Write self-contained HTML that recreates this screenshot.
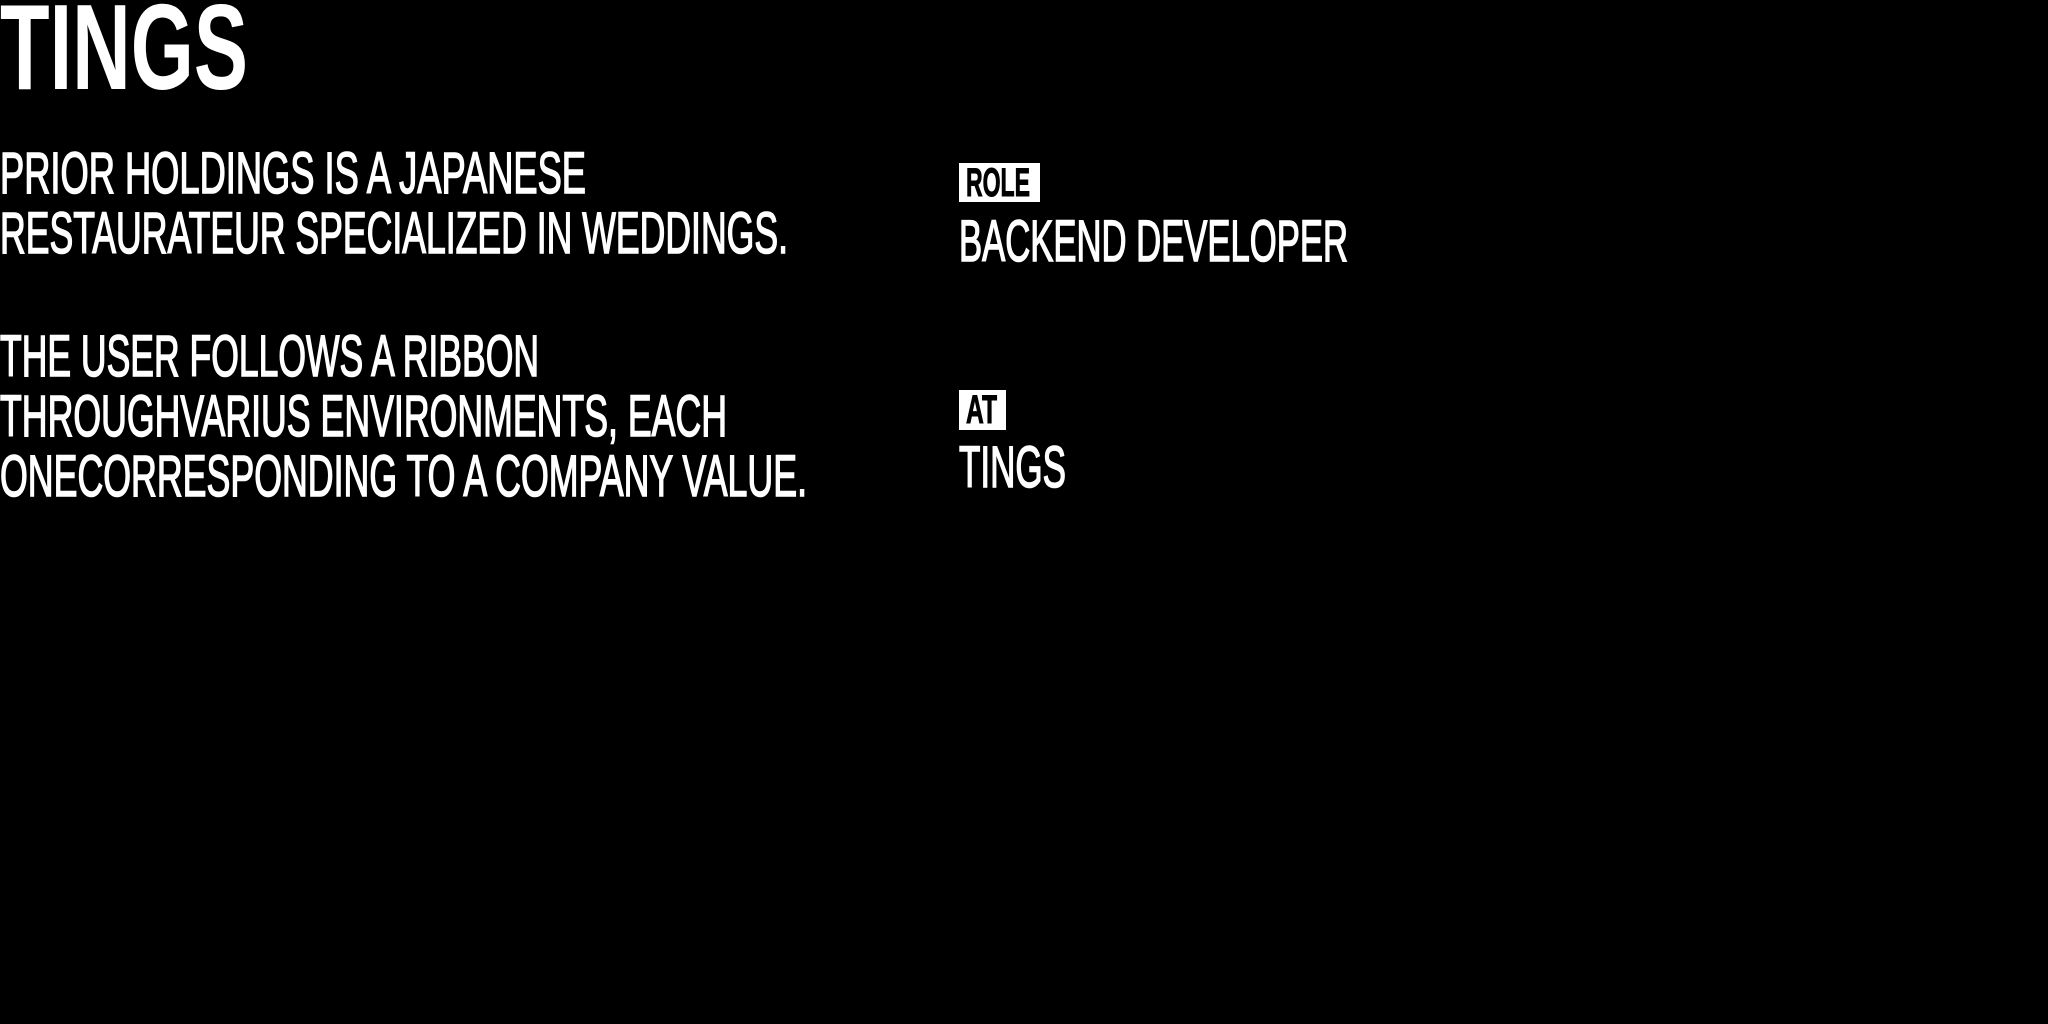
<!DOCTYPE html>
<html>
<head>
<meta charset="utf-8">
<style>
html,body{margin:0;padding:0;background:#000;width:2048px;height:1024px;overflow:hidden}
svg{display:block}
text{font-family:"Liberation Sans",sans-serif;fill:#fff}
.b{stroke:#fff;stroke-width:1.6px}
.k{fill:#000;stroke:#000;stroke-width:1px}
</style>
</head>
<body>
<svg width="2048" height="1024" viewBox="0 0 2048 1024" xmlns="http://www.w3.org/2000/svg">
  <rect width="2048" height="1024" fill="#000"/>
  <text x="0" y="89" font-size="122" font-weight="bold" textLength="248" lengthAdjust="spacingAndGlyphs">TINGS</text>

  <text class="b" x="0" y="193" font-size="58" textLength="586" lengthAdjust="spacingAndGlyphs">PRIOR HOLDINGS IS A JAPANESE</text>
  <text class="b" x="0" y="253" font-size="58" textLength="788" lengthAdjust="spacingAndGlyphs">RESTAURATEUR SPECIALIZED IN WEDDINGS.</text>

  <text class="b" x="0" y="376" font-size="58" textLength="539" lengthAdjust="spacingAndGlyphs">THE USER FOLLOWS A RIBBON</text>
  <text class="b" x="0" y="436" font-size="58" textLength="727" lengthAdjust="spacingAndGlyphs">THROUGHVARIUS ENVIRONMENTS, EACH</text>
  <text class="b" x="0" y="496" font-size="58" textLength="807" lengthAdjust="spacingAndGlyphs">ONECORRESPONDING TO A COMPANY VALUE.</text>

  <rect x="959" y="163" width="81" height="39" fill="#fff"/>
  <text class="k" x="966" y="196" font-size="40" font-weight="bold" textLength="64" lengthAdjust="spacingAndGlyphs">ROLE</text>
  <text class="b" x="959" y="261" font-size="58" textLength="389" lengthAdjust="spacingAndGlyphs">BACKEND DEVELOPER</text>

  <rect x="959" y="390" width="47" height="40" fill="#fff"/>
  <text class="k" x="966" y="423" font-size="40" font-weight="bold" textLength="31" lengthAdjust="spacingAndGlyphs">AT</text>
  <text class="b" x="959" y="487" font-size="58" textLength="107" lengthAdjust="spacingAndGlyphs">TINGS</text>
</svg>
</body>
</html>
